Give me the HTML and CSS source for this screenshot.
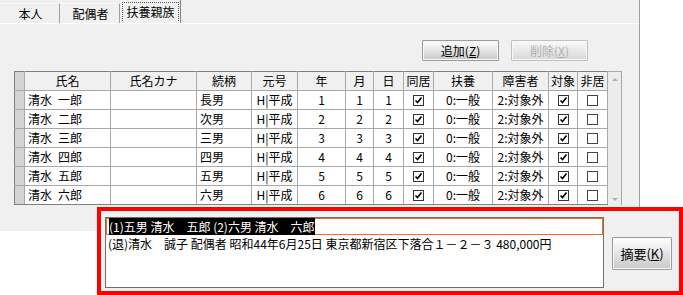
FILE: index.html
```html
<!DOCTYPE html>
<html lang="ja">
<head>
    <meta charset="UTF-8">
    <title>扶養親族</title>
    <link rel="stylesheet" href="styles.css">
</head>
<body>
    <div class="window">
        <div class="tabs">
            <div class="tab">本人</div>
            <div class="tab">配偶者</div>
            <div class="tab active"><span class="focus">扶養親族</span></div>
        </div>
        <div class="panel">
            <div class="toolbar">
                <button class="btn">追加(<u>Z</u>)</button>
                <button class="btn" disabled>削除(<u>X</u>)</button>
            </div>
            <div class="grid">
                <table>
                    <colgroup>
                        <col style="width:10px"><col style="width:86px"><col style="width:86px">
                        <col style="width:55px"><col style="width:46px"><col style="width:48px">
                        <col style="width:28px"><col style="width:30px"><col style="width:30px">
                        <col style="width:59px"><col style="width:56px"><col style="width:29px">
                        <col style="width:30px">
                    </colgroup>
                    <thead>
                        <tr>
                            <th class="ind"></th><th>氏名</th><th>氏名カナ</th><th>続柄</th><th>元号</th>
                            <th>年</th><th>月</th><th>日</th><th>同居</th><th>扶養</th><th>障害者</th>
                            <th>対象</th><th>非居</th>
                        </tr>
                    </thead>
                    <tbody id="rows"></tbody>
                </table>
                <div class="scrollbar">
                    <span class="arrow up"></span>
                    <span class="arrow down"></span>
                </div>
            </div>
        </div>
    </div>

    <div class="summary">
        <div class="memo">
            <div class="line selected"><span class="hl">(1)五男 清水　五郎 (2)六男 清水　六郎</span></div>
            <div class="line">(退)清水　誠子 配偶者 昭和44年6月25日 東京都新宿区下落合１－２－３ 480,000円</div>
        </div>
        <button class="btn memo-btn">摘要(<u>K</u>)</button>
    </div>

    <script>
    const people = [
        ['清水\u2002一郎', '長男', 1],
        ['清水\u2002二郎', '次男', 2],
        ['清水\u2002三郎', '三男', 3],
        ['清水\u2002四郎', '四男', 4],
        ['清水\u2002五郎', '五男', 5],
        ['清水\u2002六郎', '六男', 6]
    ];
    const tbody = document.getElementById('rows');
    const checked = '<span class="chk"><svg width="9" height="9" viewBox="0 0 9 9"><path d="M1.5 4.5 L3.5 6.5 L7.5 1.5" fill="none" stroke="#000" stroke-width="1.6"/></svg></span>';
    const empty = '<span class="chk off"></span>';

    people.forEach(function (p) {
        const tr = document.createElement('tr');
        tr.innerHTML =
            '<td class="ind"></td>' +
            '<td class="left">' + p[0] + '</td>' +
            '<td></td>' +
            '<td class="left">' + p[1] + '</td>' +
            '<td>H|平成</td>' +
            '<td>' + p[2] + '</td><td>' + p[2] + '</td><td>' + p[2] + '</td>' +
            '<td>' + checked + '</td>' +
            '<td>0:一般</td>' +
            '<td>2:対象外</td>' +
            '<td>' + checked + '</td>' +
            '<td>' + empty + '</td>';
        tbody.appendChild(tr);
    });
    </script>
</body>
</html>
```

FILE: styles.css
```css
body {
    margin: 0;
    background-color: #fff;
    font-family: "Noto Sans CJK JP", "Noto Sans", sans-serif;
    font-size: 12px;
    color: #000;
    position: relative;
    width: 683px;
    height: 295px;
    overflow: hidden;
}

.window {
    width: 639px;
    height: 231px;
    background-color: #f0f0f0;
    border-right: 1px solid #a0a0a0;
}

.tabs {
    display: flex;
    height: 23px;
    align-items: flex-end;
}

.tab {
    width: 60px;
    height: 20px;
    line-height: 20px;
    text-align: center;
    border-top: 1px dotted #fff;
    border-right: 1px solid #a0a0a0;
    box-sizing: border-box;
    padding-left: 2px;
}

.tab.active {
    height: 23px;
    line-height: 19px;
    border: none;
    padding: 2px 1px 0;
    margin-left: 1px;
    border-right: 1px solid #808080;
}

.focus {
    display: block;
    height: 19px;
    border: 1px dotted #555;
    border-bottom: none;
    box-sizing: border-box;
    line-height: 17px;
}

.panel {
    border-top: 1px solid #fff;
    padding: 16px 0 0 14px;
}

.toolbar {
    display: flex;
    justify-content: flex-end;
    gap: 12px;
    width: 574px;
    margin-bottom: 10px;
}

.btn {
    width: 77px;
    height: 21px;
    padding: 0;
    font-family: inherit;
    font-size: 12px;
    color: #000;
    border: 1px solid #9a9a9a;
    border-radius: 1px;
    background: linear-gradient(#ffffff, #e4e4e4 50%, #c8c8c8);
    box-shadow: inset 0 0 0 1px #f8f8f8;
}

.btn:disabled {
    color: #b0b0b0;
    border-color: #c0c0c0;
    background: linear-gradient(#fafafa, #e8e8e8 50%, #d8d8d8);
}

.grid {
    display: flex;
    width: 608px;
}

table {
    border-collapse: collapse;
    table-layout: fixed;
    width: 593px;
    background-color: #fff;
}

th, td {
    height: 18px;
    padding: 0;
    border: 1px solid #a8a8a8;
    text-align: center;
    font-weight: normal;
    white-space: nowrap;
    overflow: hidden;
    line-height: 18px;
}

th {
    background-color: #f0f0f0;
}

th.ind, td.ind {
    background-color: #d4d4d4;
    border-left-color: #808080;
}

td.left {
    text-align: left;
    padding-left: 3px;
}

tbody tr:last-child td {
    border-bottom-color: #808080;
}

thead th {
    border-top-color: #808080;
}

.chk {
    display: inline-block;
    width: 9px;
    height: 9px;
    border: 1px solid #333;
    vertical-align: -1px;
    background-color: #fff;
}

.chk svg {
    display: block;
}

.chk.off {
    border-color: #444;
}

.scrollbar {
    width: 15px;
    height: 134px;
    background-color: #ececec;
    border-top: 1px solid #a8a8a8;
    border-right: 1px solid #a8a8a8;
    box-sizing: border-box;
    display: flex;
    flex-direction: column;
    justify-content: space-between;
    align-items: center;
    padding: 6px 0 4px;
}

.arrow {
    width: 0;
    height: 0;
    border-left: 3px solid transparent;
    border-right: 3px solid transparent;
}

.arrow.up {
    border-bottom: 3px solid #b0b0b0;
}

.arrow.down {
    border-top: 3px solid #b0b0b0;
}

/* red highlight box laid over the window edge */
.summary {
    position: absolute;
    left: 97px;
    top: 207px;
    width: 586px;
    height: 88px;
    box-sizing: border-box;
    border: 4px solid #ff0000;
    background-color: #f0f0f0;
    display: flex;
    align-items: flex-start;
    padding: 6px 0 0 4px;
    gap: 8px;
}

.memo {
    width: 499px;
    height: 71px;
    box-sizing: border-box;
    background-color: #fff;
    border: 1px solid #707070;
}

.line {
    height: 16px;
    line-height: 16px;
    padding-left: 2px;
    white-space: nowrap;
}

.line.selected {
    border: 1px solid #f07020;
    height: 15px;
    line-height: 15px;
    margin: 0 0 1px;
}

.hl {
    background-color: #000;
    color: #fff;
}

.memo-btn {
    width: 60px;
    height: 33px;
    margin-top: 20px;
    font-size: 13px;
}
```
